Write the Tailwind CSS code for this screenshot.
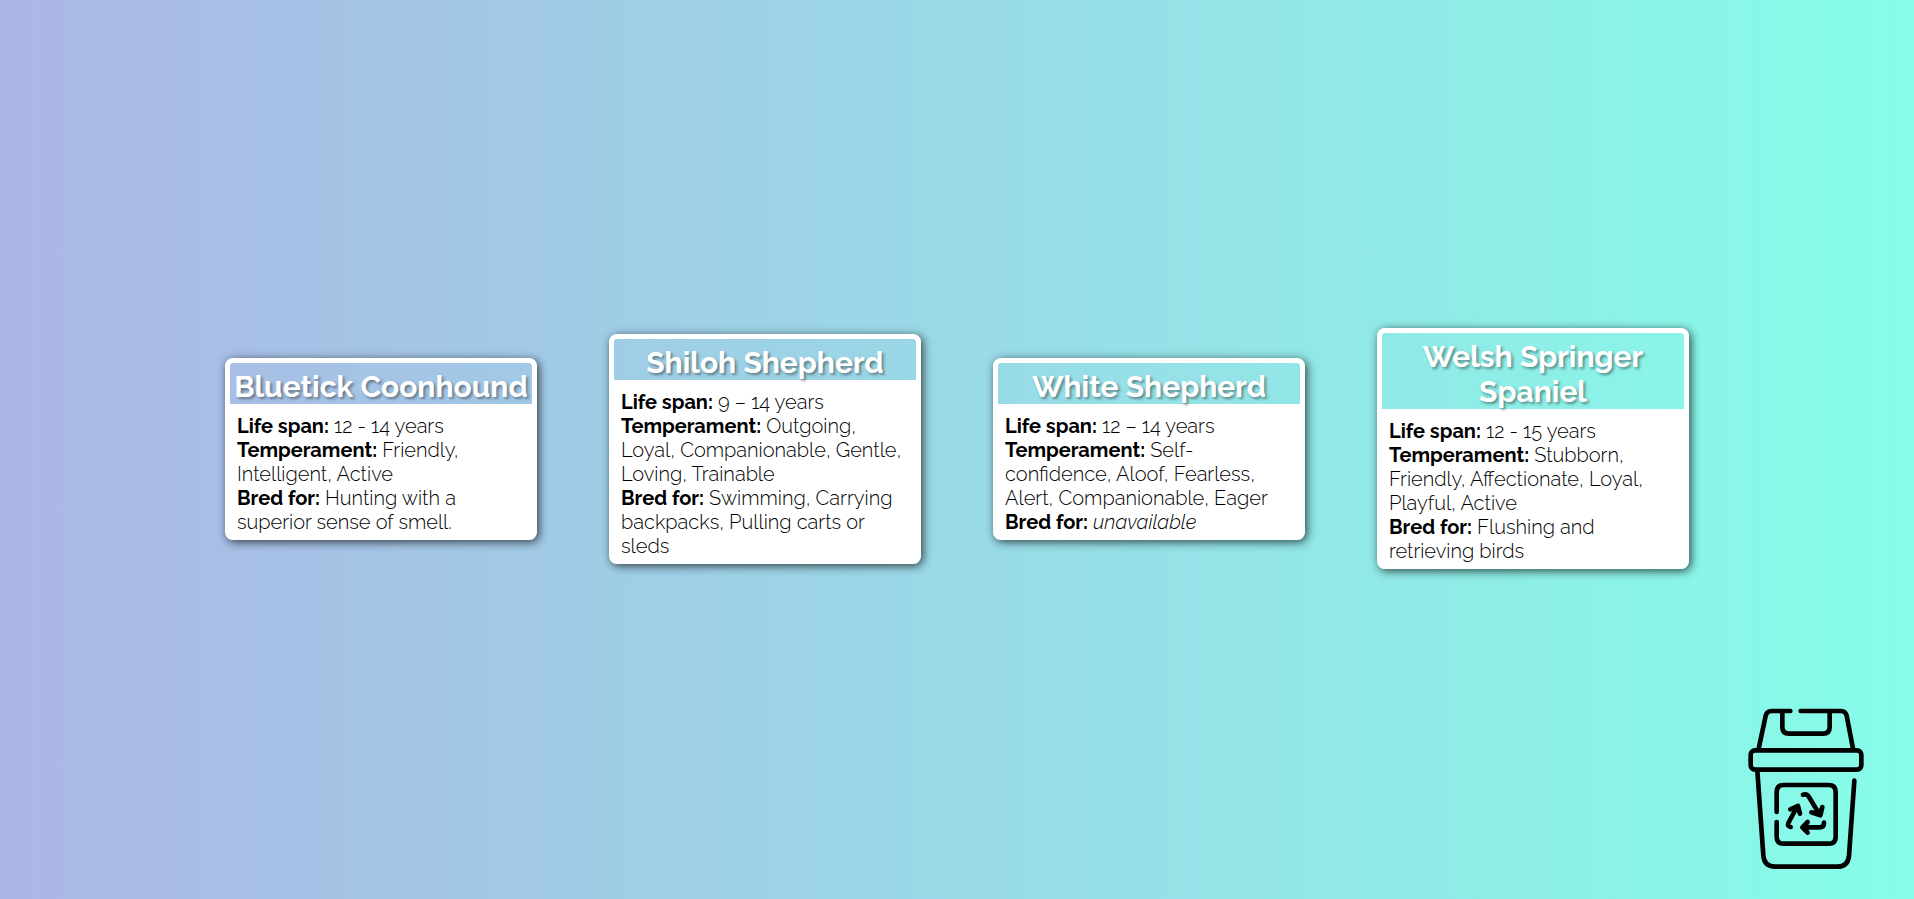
<!DOCTYPE html>
<html lang="en">
<head>
<meta charset="utf-8">
<meta name="viewport" content="width=device-width, initial-scale=1">
<title>Dog breeds</title>
<script src="https://cdn.jsdelivr.net/npm/@tailwindcss/browser@4"></script>
</head>
<body class="min-h-screen bg-linear-to-r/srgb from-[#acb6e5] to-[#86fde8] font-['Raleway','Lato',sans-serif] text-xl leading-6 text-black [font-variant-numeric:oldstyle-nums]">
<main class="flex min-h-screen flex-wrap content-center items-center justify-center gap-[72px] pb-0.5">
  <article class="w-[312px] rounded-lg border-[5px] border-white shadow-[2px_2px_10px_rgba(0,0,0,0.7)]">
    <h2 class="pt-1.5 text-center text-[30px] leading-[35px] font-bold text-white text-shadow-[2px_2px_3px_rgba(0,0,0,0.4)]">Bluetick Coonhound</h2>
    <div class="bg-white px-[7px] pt-2.5 pb-px font-light">
      <p><strong class="font-bold">Life span:</strong> 12 - 14 years</p>
      <p><strong class="font-bold">Temperament:</strong> Friendly,<br>Intelligent, Active</p>
      <p><strong class="font-bold">Bred for:</strong> Hunting with a<br>superior sense of smell.</p>
    </div>
  </article>
  <article class="w-[312px] rounded-lg border-[5px] border-white shadow-[2px_2px_10px_rgba(0,0,0,0.7)]">
    <h2 class="pt-1.5 text-center text-[30px] leading-[35px] font-bold text-white text-shadow-[2px_2px_3px_rgba(0,0,0,0.4)]">Shiloh Shepherd</h2>
    <div class="bg-white px-[7px] pt-2.5 pb-px font-light">
      <p><strong class="font-bold">Life span:</strong> 9 – 14 years</p>
      <p><strong class="font-bold">Temperament:</strong> Outgoing,<br>Loyal, Companionable, Gentle,<br>Loving, Trainable</p>
      <p><strong class="font-bold">Bred for:</strong> Swimming, Carrying<br>backpacks, Pulling carts or<br>sleds</p>
    </div>
  </article>
  <article class="w-[312px] rounded-lg border-[5px] border-white shadow-[2px_2px_10px_rgba(0,0,0,0.7)]">
    <h2 class="pt-1.5 text-center text-[30px] leading-[35px] font-bold text-white text-shadow-[2px_2px_3px_rgba(0,0,0,0.4)]">White Shepherd</h2>
    <div class="bg-white px-[7px] pt-2.5 pb-px font-light">
      <p><strong class="font-bold">Life span:</strong> 12 – 14 years</p>
      <p><strong class="font-bold">Temperament:</strong> Self-<br>confidence, Aloof, Fearless,<br>Alert, Companionable, Eager</p>
      <p><strong class="font-bold">Bred for:</strong> <em>unavailable</em></p>
    </div>
  </article>
  <article class="w-[312px] rounded-lg border-[5px] border-white shadow-[2px_2px_10px_rgba(0,0,0,0.7)]">
    <h2 class="pt-1.5 text-center text-[30px] leading-[35px] font-bold text-white text-shadow-[2px_2px_3px_rgba(0,0,0,0.4)]">Welsh Springer<br>Spaniel</h2>
    <div class="bg-white px-[7px] pt-2.5 pb-px font-light">
      <p><strong class="font-bold">Life span:</strong> 12 - 15 years</p>
      <p><strong class="font-bold">Temperament:</strong> Stubborn,<br>Friendly, Affectionate, Loyal,<br>Playful, Active</p>
      <p><strong class="font-bold">Bred for:</strong> Flushing and<br>retrieving birds</p>
    </div>
  </article>
</main>
<button type="button" aria-label="Trash" class="fixed right-[39px] bottom-5 cursor-pointer">
  <svg class="h-[184px] w-[140px]" viewBox="0 0 420 552" fill="none" stroke="#000" stroke-width="14" stroke-linecap="round" stroke-linejoin="round" aria-hidden="true">
    <path d="M166 48H110Q96 48 92 62L71 161"/>
    <path d="M197 48H318Q331 48 335 62L354 161"/>
    <path d="M142 50V96Q142 116 162 116H264Q284 116 284 96V50"/>
    <rect x="47" y="166" width="332" height="58" rx="13"/>
    <path d="M67 228L85 482Q88 515 120 515H307Q339 515 342 482L358 257"/>
    <path d="M125 351V291Q125 270 146 270H281Q302 270 302 291V425Q302 446 281 446H146Q125 446 125 425V381"/>
    <path d="M204 299Q216 295 222 306L252 356M229 352L256 361L262 336"/>
    <path d="M167 396Q156 394 160 384L186 336M166 343L189 333L195 356"/>
    <path d="M267 383Q267 397 254 397H206M218 381L202 397L218 413"/>
    <path fill="#000" stroke-width="6" d="M232 352L256 361L262 340Z M168 343L189 333L195 352Z M217 383L202 397L217 411Z"/>
  </svg>
</button>
</body>
</html>
